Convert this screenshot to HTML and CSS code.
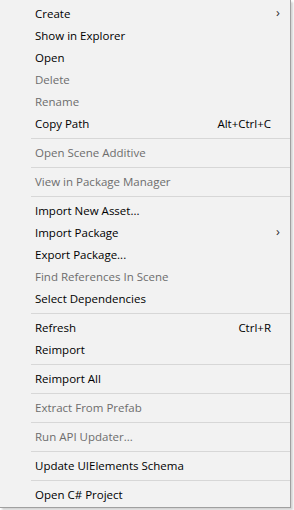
FILE: index.html
```html
<!DOCTYPE html>
<html>
<head>
<meta charset="utf-8">
<link rel="stylesheet" href="styles.css">
</head>
<body>
<div class="menu">
  <div class="item"><span class="label">Create</span><span class="arrow">&#x203A;</span></div>
  <div class="item"><span class="label">Show in Explorer</span></div>
  <div class="item"><span class="label">Open</span></div>
  <div class="item disabled"><span class="label">Delete</span></div>
  <div class="item disabled"><span class="label">Rename</span></div>
  <div class="item"><span class="label">Copy Path</span><span class="shortcut">Alt+Ctrl+C</span></div>
  <div class="sep"></div>
  <div class="item disabled"><span class="label">Open Scene Additive</span></div>
  <div class="sep"></div>
  <div class="item disabled"><span class="label">View in Package Manager</span></div>
  <div class="sep"></div>
  <div class="item"><span class="label">Import New Asset...</span></div>
  <div class="item"><span class="label">Import Package</span><span class="arrow">&#x203A;</span></div>
  <div class="item"><span class="label">Export Package...</span></div>
  <div class="item disabled"><span class="label">Find References In Scene</span></div>
  <div class="item"><span class="label">Select Dependencies</span></div>
  <div class="sep"></div>
  <div class="item"><span class="label">Refresh</span><span class="shortcut">Ctrl+R</span></div>
  <div class="item"><span class="label">Reimport</span></div>
  <div class="sep"></div>
  <div class="item"><span class="label">Reimport All</span></div>
  <div class="sep"></div>
  <div class="item disabled"><span class="label">Extract From Prefab</span></div>
  <div class="sep"></div>
  <div class="item disabled"><span class="label">Run API Updater...</span></div>
  <div class="sep"></div>
  <div class="item"><span class="label">Update UIElements Schema</span></div>
  <div class="sep"></div>
  <div class="item"><span class="label">Open C# Project</span></div>
</div>
</body>
</html>
```
FILE: styles.css
```css
html, body {
  margin: 0;
  padding: 0;
  background: #ffffff;
}
body {
  width: 294px;
  height: 510px;
  overflow: hidden;
}
.menu {
  width: 290px;
  height: 504px;
  background: #f2f2f2;
  border-right: 1px solid #a0a0a0;
  border-bottom: 1px solid #a0a0a0;
  box-shadow: 2px 2px 2px rgba(0,0,0,0.18);
  padding-top: 3px;
  display: flex;
  flex-direction: column;
  font-family: "Open Sans", "Noto Sans", sans-serif;
  font-size: 11.5px;
  color: #000;
}
.item {
  height: 22px;
  box-sizing: border-box;
  padding-bottom: 2px;
  display: flex;
  align-items: center;
  padding-left: 35px;
  padding-right: 19px;
  position: relative;
}
.label {
  flex: 1;
  white-space: nowrap;
}
.disabled {
  color: #6d6d6d;
}
.shortcut {
  white-space: nowrap;
}
.arrow {
  position: absolute;
  left: 276px;
  top: 0;
  font-size: 13px;
  color: #333;
}
.sep {
  height: 1px;
  background: #d7d7d7;
  margin: 3px 0 3px 31px;
}
```
